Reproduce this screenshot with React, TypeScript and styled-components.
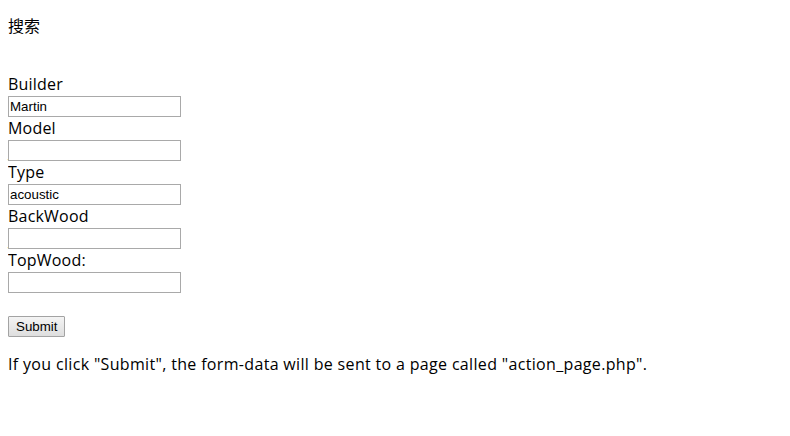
import { FC } from 'react';
import styled, { createGlobalStyle } from 'styled-components';

const GlobalStyle = createGlobalStyle`
    body {
        margin: 8px;
        background: #ffffff;
        color: #000000;
        font-family: "Open Sans", "Noto Sans CJK SC", sans-serif;
        font-size: 16px;
    }
`

const fields = [
    { label: 'Builder', value: 'Martin' },
    { label: 'Model', value: '' },
    { label: 'Type', value: 'acoustic' },
    { label: 'BackWood', value: '' },
    { label: 'TopWood:', value: '' },
];

const App: FC = () => {
    return (
        <>
            <GlobalStyle />
            <Title>搜索</Title>
            <Form onSubmit={(e) => e.preventDefault()}>
                {fields.map((f) => (
                    <Field key={f.label}>
                        <Label>{f.label}</Label>
                        <Input type="text" defaultValue={f.value} />
                    </Field>
                ))}
                <SubmitButton type="submit">Submit</SubmitButton>
            </Form>
            <Note>
                If you click "Submit", the form-data will be sent to a page called "action_page.php".
            </Note>
        </>
    );
}

const Title = styled.p`
    margin: 7px 0 0;
    line-height: 21px;
    font-family: "Noto Sans CJK SC", sans-serif;
`

const Form = styled.form`
    display: flex;
    flex-direction: column;
    align-items: flex-start;
    margin-top: 37px;
`

const Field = styled.div`
    display: flex;
    flex-direction: column;
    align-items: flex-start;
`

const Label = styled.label`
    line-height: 23px;
    letter-spacing: 0.2px;
`

const Input = styled.input`
    box-sizing: border-box;
    width: 173px;
    height: 21px;
    margin: 0;
    padding: 1px 1px;
    border: 1px solid #a9a9a9;
    font-family: "Liberation Sans", Arial, sans-serif;
    font-size: 13.33px;
    color: #000;
    outline: none;
`

const SubmitButton = styled.button`
    box-sizing: border-box;
    margin-top: 23px;
    height: 21px;
    padding: 0 7px;
    border: 1px solid #a3a3a3;
    border-radius: 1px;
    background: linear-gradient(#f4f4f4, #dedede);
    font-family: "Liberation Sans", Arial, sans-serif;
    font-size: 13.33px;
    color: #000;
`

const Note = styled.p`
    margin: 16px 0 0;
    line-height: 22px;
    letter-spacing: 0.33px;
`

export default App;
